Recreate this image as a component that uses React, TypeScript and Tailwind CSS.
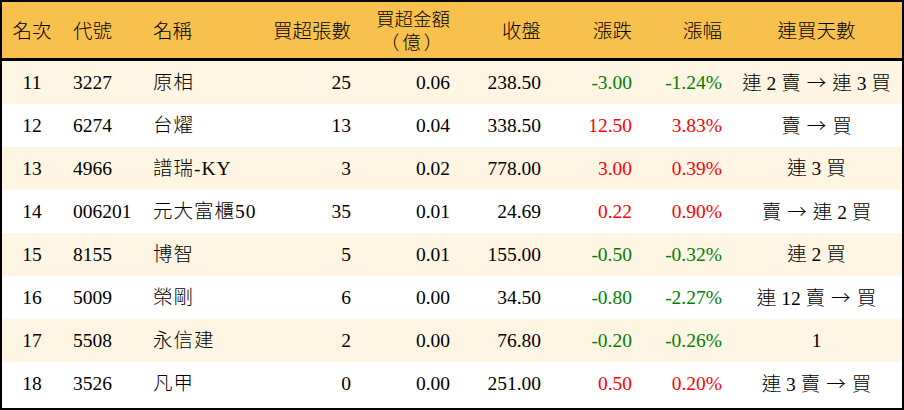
const rows = [
  { rank: 11, code: '3227', name: '原相', lots: 25, amt: '0.06', close: '238.50', chg: '-3.00', pct: '-1.24%', streak: ['連 2 賣', '連 3 買'] },
  { rank: 12, code: '6274', name: '台燿', lots: 13, amt: '0.04', close: '338.50', chg: '12.50', pct: '3.83%', streak: ['賣', '買'] },
  { rank: 13, code: '4966', name: '譜瑞-KY', lots: 3, amt: '0.02', close: '778.00', chg: '3.00', pct: '0.39%', streak: ['連 3 買'] },
  { rank: 14, code: '006201', name: '元大富櫃50', lots: 35, amt: '0.01', close: '24.69', chg: '0.22', pct: '0.90%', streak: ['賣', '連 2 買'] },
  { rank: 15, code: '8155', name: '博智', lots: 5, amt: '0.01', close: '155.00', chg: '-0.50', pct: '-0.32%', streak: ['連 2 買'] },
  { rank: 16, code: '5009', name: '榮剛', lots: 6, amt: '0.00', close: '34.50', chg: '-0.80', pct: '-2.27%', streak: ['連 12 賣', '買'] },
  { rank: 17, code: '5508', name: '永信建', lots: 2, amt: '0.00', close: '76.80', chg: '-0.20', pct: '-0.26%', streak: ['1'] },
  { rank: 18, code: '3526', name: '凡甲', lots: 0, amt: '0.00', close: '251.00', chg: '0.50', pct: '0.20%', streak: ['連 3 賣', '買'] },
];

const cols = 'grid grid-cols-[60px_81px_117px_100px_99px_91px_91px_90px_1fr] items-center';

export default function App() {
  return (
    <div
      className="w-[904px] h-[410px] bg-white border-2 border-black text-[19.5px] text-black font-light overflow-hidden"
      style={{ fontFamily: '"Liberation Serif", "Noto Sans CJK TC", serif' }}
    >
      <div className={`${cols} h-[59px] pt-[3px] bg-[#f8c14e] border-b-[3px] border-black`}>
        <div className="text-center">名次</div>
        <div className="pl-[11px]">代號</div>
        <div className="pl-[10px]">名稱</div>
        <div className="text-right pr-[9px]">買超張數</div>
        <div className="text-right pr-[9px] text-[18.5px] leading-[21px]">
          <span className="inline-block text-center">
            <span className="block">買超金額</span>
            <span className="block tracking-[3px]" style={{ fontFamily: '"Noto Sans CJK TC", serif' }}>（億）</span>
          </span>
        </div>
        <div className="text-right pr-[9px]">收盤</div>
        <div className="text-right pr-[9px]">漲跌</div>
        <div className="text-right pr-[9px]">漲幅</div>
        <div className="text-center">連買天數</div>
      </div>
      {rows.map((r, i) => {
        const color = r.chg.startsWith('-') ? 'text-[#008000]' : 'text-[#ff0000]';
        return (
          <div key={r.rank} className={`${cols} h-[43px] ${i % 2 === 0 ? 'bg-[#fef5e3]' : 'bg-white'}`}>
            <div className="text-center">{r.rank}</div>
            <div className="pl-[11px]">{r.code}</div>
            <div className="pl-[10px] whitespace-nowrap tracking-[1px]">{r.name}</div>
            <div className="text-right pr-[9px]">{r.lots}</div>
            <div className="text-right pr-[9px]">{r.amt}</div>
            <div className="text-right pr-[9px]">{r.close}</div>
            <div className={`text-right pr-[9px] ${color}`}>{r.chg}</div>
            <div className={`text-right pr-[9px] ${color}`}>{r.pct}</div>
            <div className="text-center whitespace-nowrap">
              {r.streak.map((s, j) => (
                <span key={j}>
                  {j > 0 && (
                    <span className="mx-[6px]" style={{ fontFamily: '"Noto Sans CJK TC", serif' }}>→</span>
                  )}
                  {s}
                </span>
              ))}
            </div>
          </div>
        );
      })}
    </div>
  );
}
